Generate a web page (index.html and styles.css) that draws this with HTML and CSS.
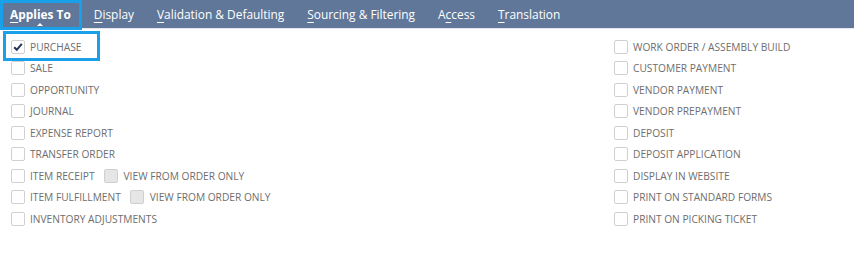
FILE: index.html
```html
<!DOCTYPE html>
<html lang="en">
<head>
    <meta charset="UTF-8">
    <title>Applies To</title>
    <link rel="stylesheet" href="styles.css">
</head>
<body>
    <!-- Subtab bar -->
    <div class="tabs">
        <span class="tab active"><u>A</u>pplies To</span>
        <span class="tab"><u>D</u>isplay</span>
        <span class="tab"><u>V</u>alidation &amp; Defaulting</span>
        <span class="tab"><u>S</u>ourcing &amp; Filtering</span>
        <span class="tab">A<u>c</u>cess</span>
        <span class="tab"><u>T</u>ranslation</span>
    </div>

    <div class="fields">
        <div class="col left">
            <div class="row"><span class="box checked"><svg viewBox="0 0 12 12" width="12" height="12"><path d="M2.2 6.2 L4.8 8.8 L9.8 2.8" fill="none" stroke="#24385b" stroke-width="2.1"/></svg></span>PURCHASE</div>
            <div class="row"><span class="box"></span>SALE</div>
            <div class="row"><span class="box"></span>OPPORTUNITY</div>
            <div class="row"><span class="box"></span>JOURNAL</div>
            <div class="row"><span class="box"></span>EXPENSE REPORT</div>
            <div class="row"><span class="box"></span>TRANSFER ORDER</div>
            <div class="row"><span class="box"></span>ITEM RECEIPT<span class="box disabled"></span>VIEW FROM ORDER ONLY</div>
            <div class="row"><span class="box"></span>ITEM FULFILLMENT<span class="box disabled"></span>VIEW FROM ORDER ONLY</div>
            <div class="row"><span class="box"></span>INVENTORY ADJUSTMENTS</div>
        </div>
        <div class="col right">
            <div class="row"><span class="box"></span>WORK ORDER / ASSEMBLY BUILD</div>
            <div class="row"><span class="box"></span>CUSTOMER PAYMENT</div>
            <div class="row"><span class="box"></span>VENDOR PAYMENT</div>
            <div class="row"><span class="box"></span>VENDOR PREPAYMENT</div>
            <div class="row"><span class="box"></span>DEPOSIT</div>
            <div class="row"><span class="box"></span>DEPOSIT APPLICATION</div>
            <div class="row"><span class="box"></span>DISPLAY IN WEBSITE</div>
            <div class="row"><span class="box"></span>PRINT ON STANDARD FORMS</div>
            <div class="row"><span class="box"></span>PRINT ON PICKING TICKET</div>
        </div>
    </div>

    <!-- Annotation highlights -->
    <div class="mark mark-tab"></div>
    <div class="mark mark-field"></div>
</body>
</html>
```

FILE: styles.css
```css
body {
    margin: 0;
    background: #fff;
    font-family: "Open Sans", "Liberation Sans", sans-serif;
    position: relative;
    height: 262px;
    overflow: hidden;
}
.tabs {
    display: flex;
    align-items: center;
    height: 28px;
    background-color: #607799;
    border-bottom: 1px solid #e4e8ee;
    padding-left: 10px;
    gap: 23px;
}
.tab {
    color: #fff;
    font-size: 11.9px;
    white-space: nowrap;
}
.tab u {
    text-decoration-thickness: 1px;
    text-underline-offset: 3px;
}
.tab.active {
    font-weight: bold;
    position: relative;
}
/* small pointer under the active tab */
.tab.active::after {
    content: "";
    position: absolute;
    left: 50%;
    bottom: -4px;
    margin-left: -3px;
    border-left: 3px solid transparent;
    border-right: 3px solid transparent;
    border-bottom: 3px solid #fff;
}
.fields {
    display: grid;
    grid-template-columns: 603px 1fr;
    padding: 7px 0 0 11px;
}
.col {
    display: flex;
    flex-direction: column;
}
.row {
    display: flex;
    align-items: center;
    height: 21.5px;
    font-size: 10.2px;
    color: #6e6e6e;
    white-space: nowrap;
}
.box {
    width: 12px;
    height: 12px;
    border: 1px solid #d0d0d0;
    border-radius: 2px;
    background: #fff;
    margin-right: 5px;
    box-sizing: content-box;
    display: flex;
}
.box.checked svg {
    display: block;
}
.box.disabled {
    background: #e6e6e6;
    margin-left: 9px;
    margin-right: 6px;
}
.mark {
    position: absolute;
    border: 3px solid #1aa0e8;
    box-sizing: border-box;
}
.mark-tab {
    left: 0;
    top: 0;
    width: 82px;
    height: 30px;
}
.mark-field {
    left: 3px;
    top: 31px;
    width: 97px;
    height: 30px;
}
```
